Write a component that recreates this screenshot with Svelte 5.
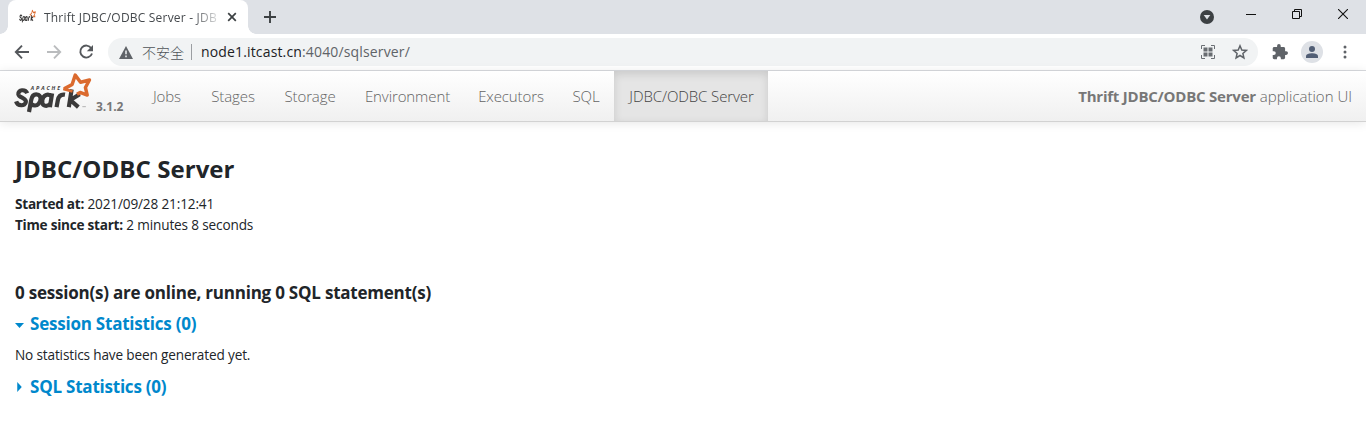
<script>
  const tabs = [
    { label: 'Jobs', width: 59 },
    { label: 'Stages', width: 73 },
    { label: 'Storage', width: 81 },
    { label: 'Environment', width: 114 },
    { label: 'Executors', width: 93 },
    { label: 'SQL', width: 57 },
    { label: 'JDBC/ODBC Server', width: 154, active: true }
  ];
</script>

{#snippet spark()}
  <g fill="none" stroke="#3b3a3a" stroke-width="4.700" stroke-linecap="butt" stroke-linejoin="round">
    <path d="M16 25C14 20 5.500 20.500 6 26C6.500 30 15 30 14.500 34.500C14 40 5 39.500 3.500 34" />
    <path d="M18 46L20.500 32.500C21.300 28 24 26 27 26.300C32 27 32 33 29 36.500C26.500 39.300 23 39 20.500 37" />
    <path d="M44 25L41.500 40.500M43.500 29C40 24.500 34 26.500 33 32.500C32 39.500 38 41 42 36.500" />
    <path d="M49 40.500L50.500 32.500C51.500 27.500 54 25.800 58.500 26.500" />
    <path d="M66 20.500L62.800 40.500M75 26L64.500 32.500L73.500 40.500" />
  </g>
  <path d="M57.500 20L66.500 15L70 4.500L76 12.500L86 10L81.500 18.500L83.500 27L75.500 24L72 26" fill="none" stroke="#db6a2e" stroke-width="3.900" stroke-linejoin="round" />
  <path d="M56.500 20L67 23" stroke="#db6a2e" stroke-width="3" />
{/snippet}

<div class="window">
  <div class="strip">
    <div class="tab">
      <svg class="favicon" viewBox="1 0 88 48" width="17" height="14" preserveAspectRatio="none">{@render spark()}</svg>
      <span class="title">Thrift JDBC/ODBC Server - JDB</span>
      <svg class="close" width="10" height="10" viewBox="0 0 10 10"><path d="M1.200 1.200L8.800 8.800M8.800 1.200L1.200 8.800" stroke="#3c4043" stroke-width="1.700" /></svg>
    </div>
    <svg class="plus" width="12" height="12" viewBox="0 0 12 12"><path d="M6 0V12M0 6H12" stroke="#3c4043" stroke-width="1.900" /></svg>
    <div class="controls">
      <svg width="16" height="16" viewBox="0 0 16 16"><circle cx="8" cy="8" r="7" fill="#3c4043" /><path d="M4.700 6H11.300L8 10.500Z" fill="#dee1e6" /></svg>
      <svg width="10" height="10" viewBox="0 0 10 10"><path d="M0 5.500H10" stroke="#111" /></svg>
      <svg width="10" height="10" viewBox="0 0 10 10"><path d="M.5 2.500H7.500V9.500H.5ZM2.500 2.500V.5H9.500V7.500H7.500" fill="none" stroke="#111" /></svg>
      <svg width="10" height="10" viewBox="0 0 10 10"><path d="M0 0L10 10M10 0L0 10" stroke="#111" stroke-width="1.100" /></svg>
    </div>
  </div>

  <div class="toolbar">
    <div class="history">
      <svg width="16" height="16" viewBox="0 0 16 16" fill="none" stroke="#55585c" stroke-width="1.900"><path d="M15 8H2.500M8 1.700L1.800 8L8 14.300" /></svg>
      <svg width="16" height="16" viewBox="0 0 16 16" fill="none" stroke="#babcbe" stroke-width="1.900"><path d="M1 8H13.500M8 1.700L14.200 8L8 14.300" /></svg>
      <svg width="16" height="16" viewBox="0 0 16 16"><path d="M13.300 4.200A6 6 0 1 0 14 9.500" fill="none" stroke="#55585c" stroke-width="1.900" /><path d="M15 1V7.200H8.800Z" fill="#55585c" /></svg>
    </div>
    <div class="omnibox">
      <svg class="warning" width="14" height="13" viewBox="0 0 14 13"><path d="M7 0L14 13H0Z" fill="#5f6368" /><path d="M7 4.500V8.300M7 9.600V11.200" stroke="#f1f3f4" stroke-width="1.500" /></svg>
      <span class="insecure">不安全</span>
      <span class="rule"></span>
      <span class="url"><b>node1.itcast.cn</b>:4040/sqlserver/</span>
      <svg class="qr" width="14" height="14" viewBox="0 0 14 14"><path d="M.5 4V.5H4M10 .5H13.500V4M13.500 10V13.500H10M4 13.500H.5V10" fill="none" stroke="#6b6f74" stroke-width="1" /><path d="M2.500 2.500H6.500V6.500H2.500ZM7.500 2.500H11.500V6.500H7.500ZM2.500 7.500H6.500V11.500H2.500ZM7.500 7.500H11.500V11.500H7.500Z" fill="#686c71" /></svg>
      <svg class="star" width="16" height="16" viewBox="0 0 16 16"><path d="M8 1.800L9.800 6L14.300 6.400L10.900 9.400L11.900 13.900L8 11.500L4.100 13.900L5.100 9.400L1.700 6.400L6.200 6Z" fill="none" stroke="#5f6368" stroke-width="1.500" /></svg>
    </div>
    <svg class="puzzle" width="16" height="16" viewBox="1 1 22 22"><path fill="#5f6368" d="M20.500 11H19V7c0-1.100-.9-2-2-2h-4V3.500a2.500 2.500 0 0 0-5 0V5H4c-1.100 0-2 .9-2 2v3.800h1.500a2.700 2.700 0 0 1 0 5.400H2V20c0 1.100.9 2 2 2h3.800v-1.500a2.700 2.700 0 0 1 5.400 0V22H17c1.100 0 2-.9 2-2v-4h1.500a2.500 2.500 0 0 0 0-5z" /></svg>
    <svg class="avatar" width="22" height="22" viewBox="0 0 22 22"><circle cx="11" cy="11" r="11" fill="#dee1e6" /><circle cx="11" cy="8" r="3" fill="#515e75" /><path d="M5 17V15.200C5 13 8.500 12.200 11 12.200S17 13 17 15.200V17Z" fill="#515e75" /></svg>
    <svg class="more" width="4" height="14" viewBox="0 0 4 14" fill="#5f6368"><circle cx="2" cy="2" r="1.500" /><circle cx="2" cy="7" r="1.500" /><circle cx="2" cy="12" r="1.500" /></svg>
  </div>

  <nav>
    <div class="brand">
      <svg width="80" height="42" viewBox="0 0 90 47">
        {@render spark()}
        <text x="20" y="21.500" class="apache" textLength="33">APACHE</text>
        <path d="M78 40H82" stroke="#aaa" />
      </svg>
      <span class="version">3.1.2</span>
    </div>
    {#each tabs as tab}
      <a class:active={tab.active} style:width="{tab.width}px">{tab.label}</a>
    {/each}
    <p class="app"><strong>Thrift JDBC/ODBC Server</strong> application UI</p>
  </nav>

  <main>
    <h3>JDBC/ODBC Server</h3>
    <ul>
      <li><strong>Started at:</strong> <span>2021/09/28 21:12:41</span></li>
      <li><strong>Time since start:</strong> <span>2 minutes 8 seconds</span></li>
    </ul>
    <h4 class="online">0 session(s) are online, running 0 SQL statement(s)</h4>
    <h4 class="link"><i class="down"></i><span>Session Statistics (0)</span></h4>
    <p class="none">No statistics have been generated yet.</p>
    <h4 class="link"><i class="right"></i><span>SQL Statistics (0)</span></h4>
  </main>
</div>

<style>
  :global(body) { margin: 0; background: #fff; overflow: hidden; }
  .window { width: 1366px; height: 432px; background: #fff; color: #212529; font-family: "Open Sans", "Noto Sans CJK SC", sans-serif; overflow: hidden; }
  .window * { box-sizing: border-box; }
  svg { display: block; flex: none; }
  .strip { height: 34px; display: flex; align-items: center; background: #dee1e6; }
  .tab { position: relative; width: 240px; height: 34px; margin-left: 8px; display: flex; align-items: center; background: #fff; border-radius: 8px 8px 0 0; }
  .tab::before, .tab::after { content: ""; position: absolute; bottom: 0; width: 8px; height: 8px; }
  .tab::before { left: -8px; background: radial-gradient(circle at 0 0, transparent 7.500px, #fff 8px); }
  .tab::after { right: -8px; background: radial-gradient(circle at 100% 0, transparent 7.500px, #fff 8px); }
  .favicon { margin-left: 11px; margin-bottom: 3px; }
  .title { width: 176px; margin-left: 8px; padding-top: 1px; font-size: 12px; line-height: 18px; letter-spacing: .2px; color: #45494d; white-space: nowrap; mask-image: linear-gradient(90deg, #000 148px, transparent 179px); }
  .close { margin-left: 7px; }
  .plus { margin-left: 16px; }
  .controls { display: flex; align-items: center; margin-left: auto; margin-right: 18px; margin-bottom: 6px; gap: 36px; }
  .controls svg:first-child { margin-top: 6px; margin-right: -5px; }
  .toolbar { height: 37px; display: flex; align-items: center; border-bottom: 1px solid #d9dbdf; }
  .history { width: 108px; padding-left: 14px; display: flex; gap: 16px; }
  .omnibox { width: 1150px; height: 28px; display: flex; align-items: center; border-radius: 14px; background: #f1f3f4; padding-left: 11px; }
  .insecure { margin-left: 9px; font: 300 14px/20px "Noto Sans CJK SC", sans-serif; color: #4f5358; padding-bottom: 1px; }
  .rule { width: 1px; height: 16px; background: #9b9ea2; margin: 0 9px 0 7px; }
  .url { font-size: 14px; line-height: 20px; color: #5f6368; white-space: nowrap; letter-spacing: .15px; }
  .url b { font-weight: 400; color: #202124; }
  .qr { margin-left: auto; }
  .star { margin: 0 10px 0 17px; }
  .puzzle { margin-left: 14px; }
  .avatar { margin-left: 13px; }
  .more { margin-left: 20px; }
  nav { position: relative; height: 51px; display: flex; background: linear-gradient(#fff, #f0f0f0); border-bottom: 1px solid #d2d2d2; box-shadow: 0 1px 10px rgba(0, 0, 0, .1); }
  .brand { width: 137px; display: flex; padding-left: 13px; }
  .apache { font: italic 700 6px "Open Sans", sans-serif; fill: #3b3a3a; }
  .version { margin: 27px 0 0 3px; font-size: 12px; line-height: 18px; font-weight: 700; color: #777; }
  nav a, .app { height: 50px; line-height: 50px; font-size: 15px; font-weight: 300; text-align: center; color: #636363; white-space: nowrap; letter-spacing: -.1px; }
  nav a { padding-left: 1px; }
  nav a.active { color: #444; background: #e5e5e5; box-shadow: inset 0 3px 8px rgba(0, 0, 0, .125); }
  .app { margin: 0 14px 0 auto; letter-spacing: 0; }
  .app strong { font-weight: 700; color: #777; letter-spacing: -.22px; }
  main { padding: 30px 15px 0; font-size: 13.600px; letter-spacing: -.15px; }
  main strong { letter-spacing: -.25px; }
  h3, h4, ul, main p { margin: 0; padding: 0; white-space: nowrap; }
  ul { list-style: none; }
  h3 { font-size: 24px; line-height: 33px; font-weight: 700; letter-spacing: .06px; }
  ul { padding-top: 8px; }
  li, .none { line-height: 21px; height: 21px; }
  h4 { font-size: 17px; line-height: 24px; font-weight: 700; letter-spacing: -.22px; }
  .online { margin-top: 46px; }
  .link { margin-top: 7px; color: #08c; display: flex; align-items: center; }
  .link i { width: 15px; height: 10px; display: flex; }
  i::before { content: ""; width: 9px; height: 10px; background: #08c; clip-path: polygon(0 40%, 100% 40%, 50% 90%); }
  i.right::before { clip-path: polygon(25% 0, 75% 50%, 25% 100%); }
  .none { margin-top: 8px; }
  .none + .link { margin-top: 10px; }
</style>
